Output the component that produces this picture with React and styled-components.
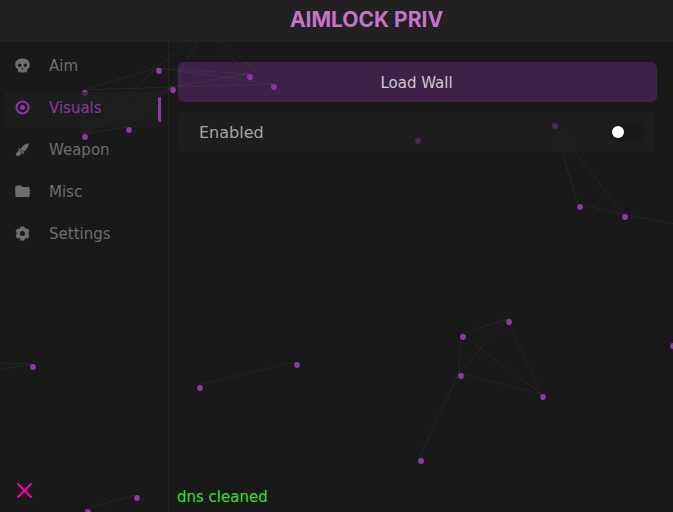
import React, { useState } from "react";
import styled, { createGlobalStyle } from "styled-components";

const GlobalStyle = createGlobalStyle`
  * { box-sizing: border-box; }
  body {
    margin: 0;
    background: #191919;
    color: #6e6e6e;
    font-family: "DejaVu Sans", Verdana, sans-serif;
  }
  button { font: inherit; border: 0; padding: 0; cursor: pointer; }
`;

const Window = styled.div`
  position: relative;
  display: flex;
  flex-direction: column;
  min-height: 100vh;
  overflow: hidden;
`;

const Header = styled.header`
  position: relative;
  z-index: 3;
  display: flex;
  align-items: center;
  justify-content: center;
  height: 42px;
  padding: 0 0 3px 60px;
  background: #212121;
`;

const Brand = styled.h1`
  margin: 0;
  font: 700 21px/24px Inter, sans-serif;
  color: #c873cb;
`;

const Body = styled.div`
  flex: 1;
  display: grid;
  grid-template-columns: 169px minmax(0, 1fr);
`;

const Sidebar = styled.aside`
  display: flex;
  flex-direction: column;
  justify-content: space-between;
  padding: 8px 7px 13px 4px;
  border-right: 1px solid #232323;
`;

const Nav = styled.nav`
  display: flex;
  flex-direction: column;
  gap: 7px;
`;

const NavButton = styled.button`
  position: relative;
  z-index: 2;
  display: flex;
  align-items: center;
  gap: 19px;
  height: 35px;
  padding: 0 11px 4px;
  border-radius: 4px;
  text-align: left;
  font-size: 15px;
  line-height: 17px;
  color: ${(p) => (p.$active ? "#8f36ab" : "#6e6e6e")};
  background: ${(p) => (p.$active ? "rgba(32, 32, 32, 0.6)" : "transparent")};

  svg { width: 15px; height: 15px; flex: none; }

  &::after {
    content: "";
    display: ${(p) => (p.$active ? "block" : "none")};
    position: absolute;
    right: 0;
    top: 5px;
    bottom: 5px;
    width: 3px;
    background: #8f36ab;
    border-radius: 2px 0 0 2px;
  }
`;

const NavLabel = styled.span`
  padding-top: 2px;
`;

const CloseButton = styled.button`
  position: relative;
  z-index: 2;
  align-self: flex-start;
  width: 17px;
  height: 17px;
  margin-left: 12px;
  background: none;
  color: #f900b4;

  svg { display: block; width: 17px; height: 17px; }
`;

const Main = styled.main`
  display: flex;
  flex-direction: column;
  padding: 20px 16px 5px 9px;
`;

const LoadButton = styled.button`
  height: 40px;
  padding: 2px 2px 0 0;
  border-radius: 6px;
  background: #3e2146;
  color: #d0cad1;
  font-size: 15px;
`;

const OptionRow = styled.label`
  position: relative;
  z-index: 2;
  display: flex;
  align-items: center;
  justify-content: space-between;
  height: 40px;
  margin: 10px 2px 0 1px;
  padding: 0 10px 0 20px;
  border-radius: 4px;
  background: rgba(31, 31, 31, 0.6);
  color: #a6a6a6;
  font-size: 16px;
`;

const Switch = styled.input`
  appearance: none;
  display: flex;
  align-items: center;
  width: 35px;
  height: 18px;
  margin: 0;
  padding: 0 2px;
  border-radius: 9px;
  background: #191919;
  cursor: pointer;

  &::before {
    content: "";
    width: 12px;
    height: 12px;
    border-radius: 50%;
    background: #fff;
  }
  &:checked { justify-content: flex-end; }
  &:checked::before { background: #8f36ab; }
`;

const Status = styled.p`
  margin: auto 0 0 -1px;
  font-size: 15px;
  line-height: 20px;
  color: #2ee62e;
`;

const Field = styled.svg`
  position: absolute;
  inset: 0;
  z-index: 1;
  width: 100%;
  height: 100%;
  pointer-events: none;
`;

const points = {
  top: [207, 32], a: [159, 71], b: [173, 90], c: [250, 77], d: [274, 87],
  e: [85, 93], f: [85, 137], g: [129, 130],
  h: [555, 126], i: [580, 207], j: [625, 217], k: [702, 232],
  l: [509, 322], m: [463, 337], n: [461, 376], o: [543, 397], p: [421, 461],
  q: [297, 365], r: [200, 388], s: [33, 367], t: [-30, 365], u: [-30, 378],
  v: [137, 498], w: [88, 512], x: [418, 141], y: [673, 346],
};

const links = [
  "top-a", "top-b", "top-c", "top-d", "a-b", "a-c", "a-d", "b-c", "b-d",
  "a-e", "a-f", "b-e", "b-f", "b-g", "e-f", "e-g", "f-g",
  "h-i", "h-j", "i-j", "j-k", "l-m", "l-n", "l-o", "m-n", "m-o", "n-o",
  "n-p", "q-r", "s-t", "s-u", "v-w",
];

function Particles() {
  return (
    <Field aria-hidden="true">
      <g fill="#8f36ab">
        {Object.entries(points).map(([id, [x, y]]) => (
          <circle key={id} cx={x} cy={y} r="2.9" />
        ))}
      </g>
      <g stroke="#fff" strokeOpacity="0.05" transform="translate(-2 -3)">
        {links.map((link) => {
          const [[x1, y1], [x2, y2]] = link.split("-").map((id) => points[id]);
          return <line key={link} x1={x1} y1={y1} x2={x2} y2={y2} />;
        })}
      </g>
    </Field>
  );
}

const SkullIcon = () => (
  <svg viewBox="0 0 15 15" fill="currentColor" aria-hidden="true">
    <path
      fillRule="evenodd"
      d="M7.5.4C3.400.4.3 2.500.3 6.200c0 1.700.2 3 .8 3.900.4.5 1 .8 1.600.9l.3 2.100c.1.9.7 1.500 1.500 1.500h.6v-.9h.9v.9h3v-.9h.9v.9h.6c.8 0 1.400-.6 1.500-1.500l.3-2.100c.6-.1 1.200-.4 1.600-.9.6-.9.8-2.200.8-3.900C14.700 2.500 11.600.4 7.500.4ZM4.700 5.600a1.700 1.700 0 1 1 0 3.400 1.700 1.700 0 0 1 0-3.400Zm5.600 0a1.700 1.700 0 1 1 0 3.400 1.700 1.700 0 0 1 0-3.400ZM7.500 9.600l1 1.700h-2Z"
    />
  </svg>
);

const TargetIcon = () => (
  <svg viewBox="0 0 15 15" fill="none" aria-hidden="true">
    <circle cx="7.5" cy="7.5" r="6" stroke="currentColor" strokeWidth="2" />
    <circle cx="7.5" cy="7.5" r="2.5" fill="currentColor" />
  </svg>
);

const KnifeIcon = () => (
  <svg viewBox="0 0 15 15" fill="currentColor" aria-hidden="true">
    <path d="M13.4 1.2C13.7 4.4 12.5 6.7 8.7 9.700L5.7 6.700C8.1 3.2 10.4 1.6 13.4 1.2Z" />
    <path d="M4.3 5.900 9.4 11 8.3 12.100 3.2 7Z" />
    <path d="M3.9 8 7.1 11.200 4.1 13.800C3.3 14.400 2.5 14.400 1.8 13.700L1.3 13.200C.7 12.500.7 11.700 1.3 10.900Z" />
  </svg>
);

const FolderIcon = () => (
  <svg viewBox="0 0 15 15" fill="currentColor" aria-hidden="true">
    <path d="M1.7 1.600h4.100l1.800 1.500h5.700c.8 0 1.400.6 1.400 1.400v7.200c0 .8-.6 1.400-1.400 1.400H1.700C.9 13.100.3 12.500.3 11.700V3c0-.8.6-1.400 1.400-1.400Z" />
  </svg>
);

const GearIcon = () => (
  <svg viewBox="0 0 15 15" fill="currentColor" aria-hidden="true">
    <circle cx="7.5" cy="7.5" r="4.2" fill="none" stroke="currentColor" strokeWidth="3.4" />
    {[0, 60, 120, 180, 240, 300].map((angle) => (
      <rect
        key={angle}
        x="5.3"
        y="0.4"
        width="4.4"
        height="4"
        rx="1.2"
        transform={`rotate(${angle} 7.5 7.5)`}
      />
    ))}
  </svg>
);

const sections = [
  ["Aim", SkullIcon],
  ["Visuals", TargetIcon],
  ["Weapon", KnifeIcon],
  ["Misc", FolderIcon],
  ["Settings", GearIcon],
];

export default function App() {
  const [active, setActive] = useState("Visuals");
  return (
    <Window>
      <GlobalStyle />
      <Header>
        <Brand>AIMLOCK PRIV</Brand>
      </Header>
      <Body>
        <Sidebar>
          <Nav aria-label="Sections">
            {sections.map(([name, Icon]) => (
              <NavButton
                key={name}
                type="button"
                $active={name === active}
                aria-current={name === active ? "page" : undefined}
                onClick={() => setActive(name)}
              >
                <Icon />
                <NavLabel>{name}</NavLabel>
              </NavButton>
            ))}
          </Nav>
          <CloseButton type="button" aria-label="Close">
            <svg viewBox="0 0 17 17" stroke="currentColor" strokeWidth="2">
              <path d="M1.5 1.5 15.5 15.5M15.5 1.5 1.5 15.5" />
            </svg>
          </CloseButton>
        </Sidebar>
        <Main>
          <LoadButton type="button">Load Wall</LoadButton>
          <OptionRow>
            Enabled
            <Switch type="checkbox" role="switch" />
          </OptionRow>
          <Status role="status">dns cleaned</Status>
        </Main>
      </Body>
      <Particles />
    </Window>
  );
}
